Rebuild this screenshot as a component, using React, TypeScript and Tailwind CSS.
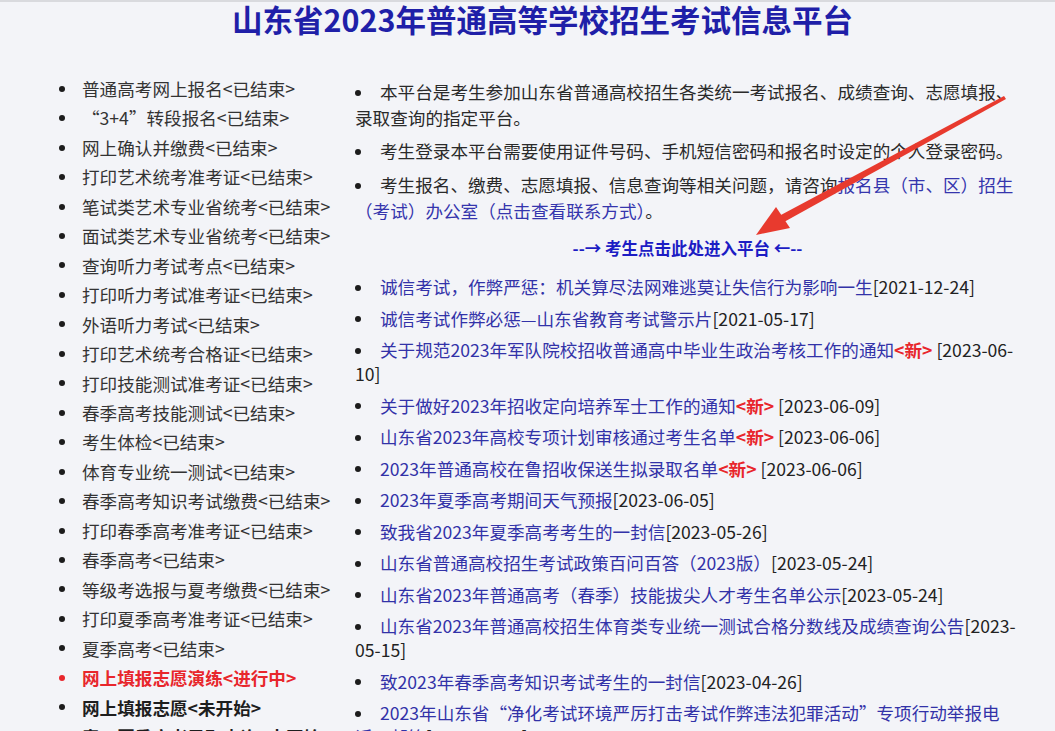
import React from "react";

const FONT = { fontFamily: '"Noto Sans CJK SC", "Liberation Sans", sans-serif' };

type LeftItem = { text: string; kind?: "red" | "bold" };

const leftItems: LeftItem[] = [
  { text: "普通高考网上报名<已结束>" },
  { text: "“3+4”转段报名<已结束>" },
  { text: "网上确认并缴费<已结束>" },
  { text: "打印艺术统考准考证<已结束>" },
  { text: "笔试类艺术专业省统考<已结束>" },
  { text: "面试类艺术专业省统考<已结束>" },
  { text: "查询听力考试考点<已结束>" },
  { text: "打印听力考试准考证<已结束>" },
  { text: "外语听力考试<已结束>" },
  { text: "打印艺术统考合格证<已结束>" },
  { text: "打印技能测试准考证<已结束>" },
  { text: "春季高考技能测试<已结束>" },
  { text: "考生体检<已结束>" },
  { text: "体育专业统一测试<已结束>" },
  { text: "春季高考知识考试缴费<已结束>" },
  { text: "打印春季高考准考证<已结束>" },
  { text: "春季高考<已结束>" },
  { text: "等级考选报与夏考缴费<已结束>" },
  { text: "打印夏季高考准考证<已结束>" },
  { text: "夏季高考<已结束>" },
  { text: "网上填报志愿演练<进行中>", kind: "red" },
  { text: "网上填报志愿<未开始>", kind: "bold" },
  { text: "春、夏季高考录取查询<未开始>", kind: "bold" },
];

type News = { title: string; isNew?: boolean; date: React.ReactNode };

const news: News[] = [
  { title: "诚信考试，作弊严惩：机关算尽法网难逃莫让失信行为影响一生", date: "[2021-12-24]" },
  { title: "诚信考试作弊必惩—山东省教育考试警示片", date: "[2021-05-17]" },
  {
    title: "关于规范2023年军队院校招收普通高中毕业生政治考核工作的通知",
    isNew: true,
    date: (
      <>
        {" "}[2023-06-<wbr />10]
      </>
    ),
  },
  { title: "关于做好2023年招收定向培养军士工作的通知", isNew: true, date: " [2023-06-09]" },
  { title: "山东省2023年高校专项计划审核通过考生名单", isNew: true, date: " [2023-06-06]" },
  { title: "2023年普通高校在鲁招收保送生拟录取名单", isNew: true, date: " [2023-06-06]" },
  { title: "2023年夏季高考期间天气预报", date: "[2023-06-05]" },
  { title: "致我省2023年夏季高考考生的一封信", date: "[2023-05-26]" },
  { title: "山东省普通高校招生考试政策百问百答（2023版）", date: "[2023-05-24]" },
  { title: "山东省2023年普通高考（春季）技能拔尖人才考生名单公示", date: "[2023-05-24]" },
  {
    title: "山东省2023年普通高校招生体育类专业统一测试合格分数线及成绩查询公告",
    date: (
      <>
        [2023-<wbr />05-15]
      </>
    ),
  },
  { title: "致2023年春季高考知识考试考生的一封信", date: "[2023-04-26]" },
  {
    title: "2023年山东省“净化考试环境严厉打击考试作弊违法犯罪活动”专项行动举报电话、邮箱",
    date: "[2023-04-21]",
  },
];

function Dot() {
  return <span className="inline-block w-[6px] h-[6px] rounded-full bg-[#1c1c1c] align-middle mb-[3px]" />;
}

export default function App() {
  return (
    <div className="relative w-[1055px] h-[731px] overflow-hidden bg-[#f3f4f8]" style={FONT}>
      <div className="h-[2px] bg-[#d9dade]" />
      <h1 className="pl-[30px] text-center text-[30.5px] leading-[34px] font-bold text-[#1f1fa8]">
        山东省2023年普通高等学校招生考试信息平台
      </h1>

      <div className="flex">
        <ul className="w-[355px] pl-[59px] pt-[38px] text-[17.6px] leading-[29.45px]">
          {leftItems.map((it, i) => (
            <li key={i} className="flex items-center whitespace-nowrap">
              <span
                className={
                  "inline-block w-[6px] h-[6px] rounded-full mr-[17px] shrink-0 " +
                  (it.kind === "red" ? "bg-[#e8262c]" : "bg-[#1c1c1c]")
                }
              />
              <span
                className={
                  it.kind === "red"
                    ? "font-bold text-[#e8262c]"
                    : it.kind === "bold"
                    ? "font-bold text-[#1e1e1e]"
                    : "text-[#333333]"
                }
              >
                {it.text}
              </span>
            </li>
          ))}
        </ul>

        <div className="w-[665px] pt-[43px] text-[17.6px]">
          <p className="leading-[26px] mb-[7px] text-[#2a2a2a]">
            <span className="inline-block w-[25px]">
              <Dot />
            </span>
            本平台是考生参加山东省普通高校招生各类统一考试报名、成绩查询、志愿填报、录取查询的指定平台。
          </p>
          <p className="leading-[26px] mb-[8px] text-[#2a2a2a]">
            <span className="inline-block w-[25px]">
              <Dot />
            </span>
            考生登录本平台需要使用证件号码、手机短信密码和报名时设定的个人登录密码。
          </p>
          <p className="leading-[26px] text-[#2a2a2a]">
            <span className="inline-block w-[25px]">
              <Dot />
            </span>
            考生报名、缴费、志愿填报、信息查询等相关问题，请咨询
            <span className="text-[#3535ad]">报名县（市、区）招生（考试）办公室（点击查看联系方式）</span>。
          </p>

          <div className="mt-[11px] text-center text-[16.5px] leading-[26px] font-bold text-[#1c1cc4]">
            --→ 考生点击此处进入平台 ←--
          </div>

          <ul className="mt-[14px] leading-[24px]">
            {news.map((n, i) => (
              <li key={i} className="mb-[7.5px] text-[#222222]">
                <span className="inline-block w-[25px]">
                  <Dot />
                </span>
                <span className="text-[#3232a8]">{n.title}</span>
                {n.isNew && <span className="font-bold text-[#e8262c]">&lt;新&gt;</span>}
                {n.date}
              </li>
            ))}
          </ul>
        </div>
      </div>

      <svg
        className="absolute left-0 top-0 pointer-events-none"
        width="1055"
        height="731"
        viewBox="0 0 1055 731"
      >
        <polygon points="1004,96 1006,99 784,222 779,216" fill="#e83a2e" />
        <polygon points="756,235 776,207 790,228" fill="#e83a2e" />
      </svg>
    </div>
  );
}
